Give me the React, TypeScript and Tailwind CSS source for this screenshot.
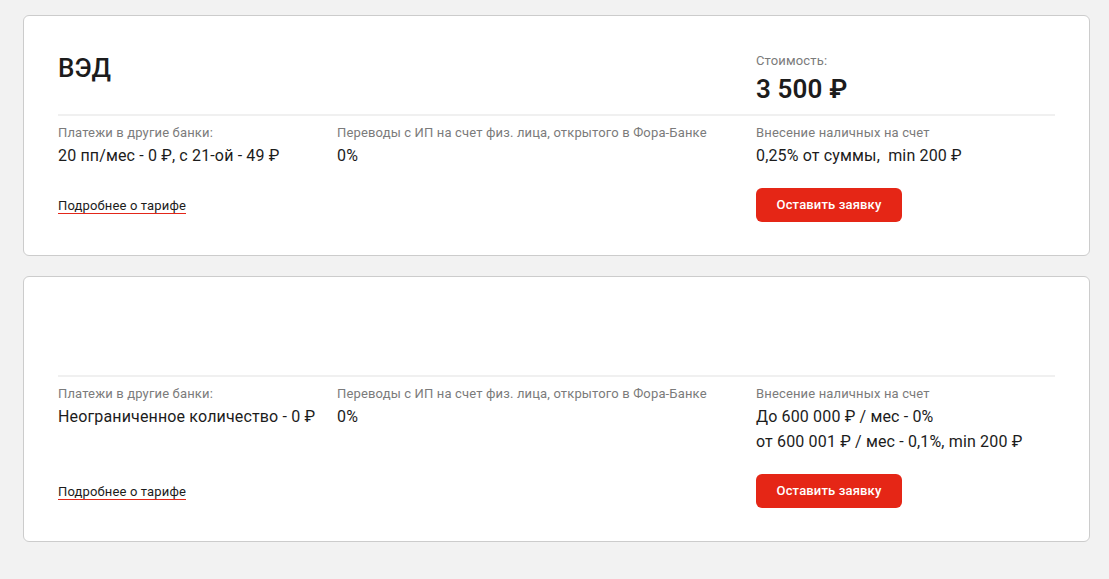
const tariffs = [
  {
    title: "ВЭД",
    price: "3 500 ₽",
    payments: ["20 пп/мес - 0 ₽, с 21-ой - 49 ₽"],
    transfers: ["0%"],
    cash: ["0,25% от суммы,\u00a0 min 200 ₽"],
  },
  {
    title: "",
    price: "",
    payments: ["Неограниченное количество - 0 ₽"],
    transfers: ["0%"],
    cash: ["До 600 000 ₽ / мес - 0%", "от 600 001 ₽ / мес - 0,1%, min 200 ₽"],
  },
]

function Cell({ label, lines }: { label: string; lines: string[] }) {
  return (
    <div>
      <div className="text-[13px] leading-[16px] text-[#7b7b7b]">{label}</div>
      <div className="mt-[2px] text-[16px] leading-[25px] text-[#1c1c1c]">
        {lines.map((l) => (
          <div key={l} className="whitespace-nowrap">
            {l}
          </div>
        ))}
      </div>
    </div>
  )
}

function TariffCard({ t }: { t: (typeof tariffs)[number] }) {
  return (
    <div className="rounded-[6px] border border-[#cccccc] bg-white px-[34px] pt-[37px] pb-[33px]">
      <div className="grid h-[51px] grid-cols-[698px_1fr]">
        <div className="text-[26px] font-medium leading-[30px] text-[#1c1c1c]">{t.title}</div>
        {t.price && (
          <div>
            <div className="text-[13px] leading-[16px] text-[#7b7b7b]">Стоимость:</div>
            <div className="mt-[5px] text-[26px] font-semibold leading-[30px] text-[#1c1c1c]">{t.price}</div>
          </div>
        )}
      </div>
      <div className="mt-[10px] h-[2px] bg-[#f0f0f0]" />
      <div className="mt-[9px] grid grid-cols-[279px_419px_1fr] items-start">
        <Cell label="Платежи в другие банки:" lines={t.payments} />
        <Cell label="Переводы с ИП на счет физ. лица, открытого в Фора-Банке" lines={t.transfers} />
        <Cell label="Внесение наличных на счет" lines={t.cash} />
      </div>
      <div className="mt-[20px] grid grid-cols-[698px_1fr] items-center">
        <div>
          <a
            href="#"
            className="inline-block border-b border-[#e32619] text-[13px] leading-[15px] text-[#1c1c1c]"
          >
            Подробнее о тарифе
          </a>
        </div>
        <div>
          <button className="h-[34px] w-[146px] rounded-[6px] bg-[#e52616] text-[13px] font-medium text-white">
            Оставить заявку
          </button>
        </div>
      </div>
    </div>
  )
}

export default function App() {
  return (
    <div
      className="min-h-[579px] bg-[#f2f2f2] pt-[15px] tracking-[0.15px]"
      style={{ fontFamily: "Roboto, 'Liberation Sans', sans-serif" }}
    >
      <div className="ml-[23px] flex w-[1067px] flex-col gap-[20px]">
        {tariffs.map((t, i) => (
          <TariffCard key={i} t={t} />
        ))}
      </div>
    </div>
  )
}
